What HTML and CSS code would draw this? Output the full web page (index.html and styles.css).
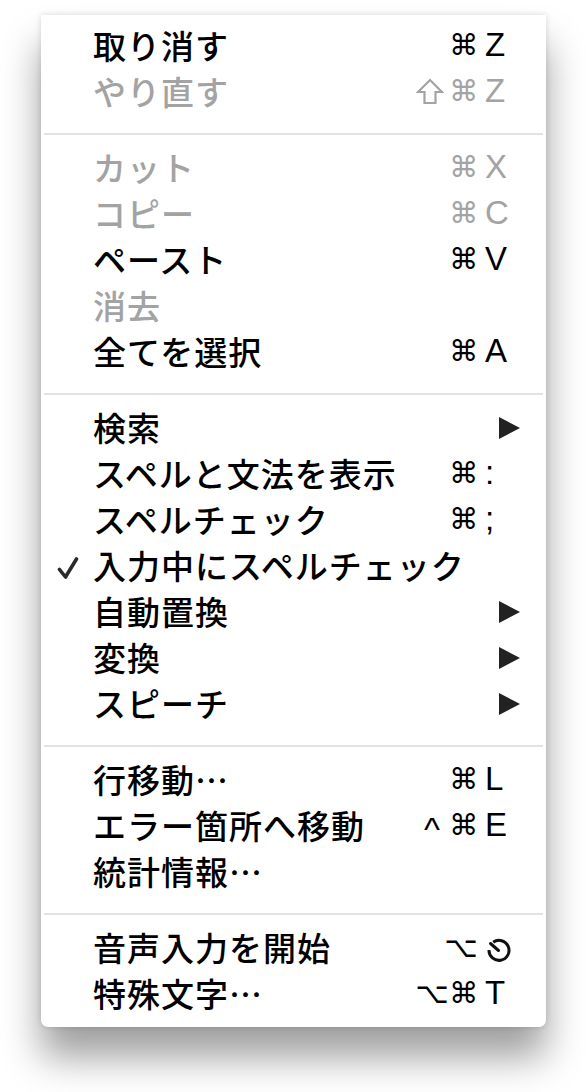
FILE: index.html
```html
<!DOCTYPE html>
<html lang="ja">
<head>
<meta charset="utf-8">
<title>編集</title>
<link rel="stylesheet" href="styles.css">
</head>
<body>
<div class="menu">
  <div class="item"><span class="check"></span><span class="label">取り消す</span><span class="sc"><span class="mods">⌘</span><span class="key">Z</span></span></div>
  <div class="item disabled"><span class="check"></span><span class="label">やり直す</span><span class="sc"><span class="mods"><svg class="shift" width="28" height="27" viewBox="0 0 28 27"><path d="M14 2 L26 14 L19.5 14 L19.5 25 L8.5 25 L8.5 14 L2 14 Z" fill="none" stroke="#a3a3a3" stroke-width="2.2" stroke-linejoin="miter"/></svg>⌘</span><span class="key">Z</span></span></div>
  <div class="sep"></div>
  <div class="item disabled"><span class="check"></span><span class="label">カット</span><span class="sc"><span class="mods">⌘</span><span class="key">X</span></span></div>
  <div class="item disabled"><span class="check"></span><span class="label">コピー</span><span class="sc"><span class="mods">⌘</span><span class="key">C</span></span></div>
  <div class="item"><span class="check"></span><span class="label">ペースト</span><span class="sc"><span class="mods">⌘</span><span class="key">V</span></span></div>
  <div class="item disabled"><span class="check"></span><span class="label">消去</span></div>
  <div class="item"><span class="check"></span><span class="label">全てを選択</span><span class="sc"><span class="mods">⌘</span><span class="key">A</span></span></div>
  <div class="sep"></div>
  <div class="item"><span class="check"></span><span class="label">検索</span><span class="arrow"></span></div>
  <div class="item"><span class="check"></span><span class="label">スペルと文法を表示</span><span class="sc"><span class="mods">⌘</span><span class="key">:</span></span></div>
  <div class="item"><span class="check"></span><span class="label">スペルチェック</span><span class="sc"><span class="mods">⌘</span><span class="key">;</span></span></div>
  <div class="item"><span class="check"><svg class="tick" width="22" height="24" viewBox="0 0 22 24"><path d="M2.5 13.5 L8.5 21 L19.5 3" fill="none" stroke="#2a2a2a" stroke-width="3.6" stroke-linecap="round" stroke-linejoin="round"/></svg></span><span class="label">入力中にスペルチェック</span></div>
  <div class="item"><span class="check"></span><span class="label">自動置換</span><span class="arrow"></span></div>
  <div class="item"><span class="check"></span><span class="label">変換</span><span class="arrow"></span></div>
  <div class="item"><span class="check"></span><span class="label">スピーチ</span><span class="arrow"></span></div>
  <div class="sep"></div>
  <div class="item"><span class="check"></span><span class="label">行移動…</span><span class="sc"><span class="mods">⌘</span><span class="key">L</span></span></div>
  <div class="item"><span class="check"></span><span class="label">エラー箇所へ移動</span><span class="sc"><span class="mods"><span class="caret">^</span>⌘</span><span class="key">E</span></span></div>
  <div class="item"><span class="check"></span><span class="label">統計情報…</span></div>
  <div class="sep"></div>
  <div class="item"><span class="check"></span><span class="label">音声入力を開始</span><span class="sc"><span class="mods">⌥</span><span class="key"><svg class="dict" width="30" height="28" viewBox="0 0 30 28"><path d="M9.2 7.2 A10 10 0 1 1 5 15" fill="none" stroke="#111" stroke-width="3"/><path d="M6.5 8.5 L14.5 15.5" fill="none" stroke="#111" stroke-width="3" stroke-linecap="round"/></svg></span></span></div>
  <div class="item"><span class="check"></span><span class="label">特殊文字…</span><span class="sc"><span class="mods">⌥⌘</span><span class="key">T</span></span></div>
</div>
</body>
</html>
```

FILE: styles.css
```css
html, body {
  margin: 0;
  background: #ffffff;
}

body {
  padding: 15px 0 70px 41px;
}

.menu {
  width: 505px;
  padding: 9px 0;
  background: #ffffff;
  border-radius: 0 0 7px 7px;
  box-shadow: 0 30px 38px rgba(0, 0, 0, 0.38), 0 0 6px rgba(0, 0, 0, 0.14);
  font-family: "Noto Sans CJK JP", "Noto Sans CJK SC", sans-serif;
  font-size: 33px;
  font-weight: 500;
  color: #000;
}

.item {
  display: flex;
  align-items: center;
  box-sizing: border-box;
  height: 46px;
  padding: 0 26px 4px 0;
}

.check {
  width: 52px;
  flex: none;
  display: flex;
  align-items: center;
}

.tick {
  margin-left: 16px;
  margin-top: 6px;
}

.label {
  flex: 1;
  line-height: 42px;
  letter-spacing: 1px;
  white-space: nowrap;
}

.disabled {
  color: #a3a3a3;
}

.sc {
  display: flex;
  align-items: center;
  font-family: "DejaVu Sans", "Liberation Sans", sans-serif;
  font-size: 29px;
  font-weight: normal;
  line-height: 42px;
}

.mods {
  display: flex;
  align-items: center;
  justify-content: flex-end;
  margin-right: 2px;
}

.shift {
  margin-right: 5px;
}

.caret {
  font-family: "Liberation Sans", sans-serif;
  font-size: 34px;
  margin-right: 9px;
  margin-top: 8px;
}

.key {
  width: 35px;
  padding-left: 5px;
  font-family: "Liberation Sans", "DejaVu Sans", sans-serif;
  font-size: 33px;
  display: flex;
  align-items: center;
}

.dict {
  margin-left: -1px;
  margin-top: 3px;
}

.arrow {
  width: 0;
  height: 0;
  border-top: 11px solid transparent;
  border-bottom: 11px solid transparent;
  border-left: 21px solid #222;
  margin-top: 2px;
}

.sep {
  height: 2px;
  margin: 17px 3px 11px 3px;
  background: #e3e3e3;
}
```
